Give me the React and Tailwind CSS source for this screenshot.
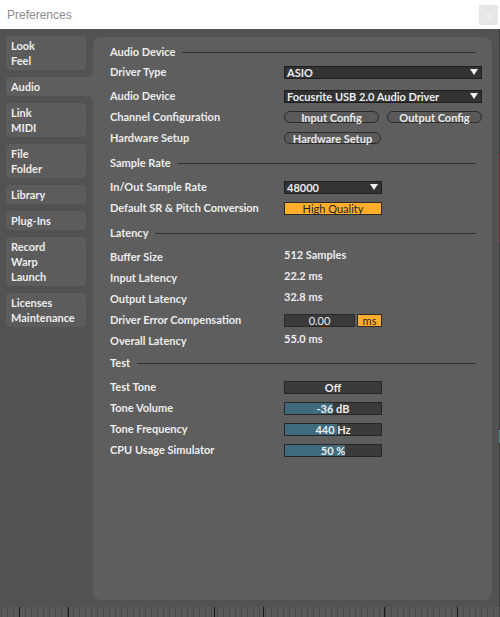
import React from "react";

const FONT = { fontFamily: "Lato, 'Noto Sans', sans-serif" };

function Tab({ lines, active }) {
  if (active) {
    return (
      <div className="relative flex">
        <div className="w-[87px] rounded-l-[4px] bg-[#5e5e5e] px-[5px] py-[2px] leading-[15px]">
          {lines.map((l) => (
            <div key={l}>{l}</div>
          ))}
        </div>
        <div className="absolute right-0 top-[-7px] h-[7px] w-[7px] bg-[#5e5e5e]">
          <div className="h-full w-full rounded-br-[7px] bg-[#525252]" />
        </div>
        <div className="absolute right-0 bottom-[-7px] h-[7px] w-[7px] bg-[#5e5e5e]">
          <div className="h-full w-full rounded-tr-[7px] bg-[#525252]" />
        </div>
      </div>
    );
  }
  return (
    <div className="w-[80px] rounded-[4px] bg-[#5c5c5c] px-[5px] py-[2px] leading-[15px]">
      {lines.map((l) => (
        <div key={l}>{l}</div>
      ))}
    </div>
  );
}

function Header({ title, className = "" }) {
  return (
    <div className={"flex h-[20px] items-center gap-[7px] pr-[16px] " + className}>
      <span>{title}</span>
      <div className="h-px flex-1 bg-[#333333]" />
    </div>
  );
}

function Row({ label, children, className = "" }) {
  return (
    <div className={"flex h-[20px] items-center " + className}>
      <div className="w-[174px] shrink-0">{label}</div>
      <div className="flex items-center">{children}</div>
    </div>
  );
}

function Arrow() {
  return (
    <svg width="8" height="6" viewBox="0 0 8 6" className="shrink-0">
      <path d="M0 0 L8 0 L4 6 Z" fill="#f0f0f0" />
    </svg>
  );
}

function Dropdown({ value, width }) {
  return (
    <div
      className={
        "flex h-[13px] items-center justify-between border border-[#1e1e1e] bg-[#333333] pl-[2px] pr-[3px] leading-none " +
        width
      }
    >
      <span>{value}</span>
      <Arrow />
    </div>
  );
}

function Pill({ children, width }) {
  return (
    <div
      className={
        "flex h-[12px] items-center justify-center rounded-full border border-[#2a2a2a] bg-[#5a5a5a] leading-none " +
        width
      }
    >
      {children}
    </div>
  );
}

function Slider({ value, pct }) {
  return (
    <div className="relative flex h-[13px] w-[98px] items-center justify-center border border-[#262626] bg-[#3b3b3b] leading-none">
      {pct > 0 && (
        <div className="absolute inset-y-0 left-0 bg-[#3f6b7d]" style={{ width: pct + "%" }} />
      )}
      <span className="relative">{value}</span>
    </div>
  );
}

export default function App() {
  const majors = [19, 68, 214, 263, 384, 457];
  const minors = [];
  for (let x = 1; x < 500; x += 6) minors.push(x);
  return (
    <div
      className="relative flex h-[617px] w-[500px] flex-col overflow-hidden bg-[#525252] text-[11px] font-bold text-[#ececec]"
      style={FONT}
    >
      {/* Title bar */}
      <div className="flex h-[29px] shrink-0 items-center justify-between bg-white pl-[7px] pr-[2px]">
        <span
          className="text-[12px] font-normal text-[#8c8c8c]"
          style={{ fontFamily: "'Liberation Sans', Arial, sans-serif" }}
        >
          Preferences
        </span>
        <div className="flex h-[20px] w-[19px] items-center justify-center bg-[#e6e6e6] text-[10px] font-normal leading-none text-[#f8f8f8]">
          x
        </div>
      </div>

      {/* Body */}
      <div className="flex flex-1">
        {/* Sidebar */}
        <div className="flex w-[93px] flex-col gap-[7px] pl-[6px] pt-[7px]">
          <Tab lines={["Look", "Feel"]} />
          <Tab lines={["Audio"]} active />
          <Tab lines={["Link", "MIDI"]} />
          <Tab lines={["File", "Folder"]} />
          <Tab lines={["Library"]} />
          <Tab lines={["Plug-Ins"]} />
          <Tab lines={["Record", "Warp", "Launch"]} />
          <Tab lines={["Licenses", "Maintenance"]} />
        </div>

        {/* Panel */}
        <div className="mt-[8px] mb-[7px] flex w-[399px] flex-col rounded-[8px] bg-[#5e5e5e] pl-[17px] pt-[5px]">
          <Header title="Audio Device" />
          <Row label="Driver Type">
            <Dropdown value="ASIO" width="w-[198px]" />
          </Row>
          <Row label="Audio Device" className="mt-[4px]">
            <Dropdown value="Focusrite USB 2.0 Audio Driver" width="w-[198px]" />
          </Row>
          <Row label="Channel Configuration" className="mt-[1px]">
            <div className="flex gap-[8px]">
              <Pill width="w-[95px]">Input Config</Pill>
              <Pill width="w-[95px]">Output Config</Pill>
            </div>
          </Row>
          <Row label="Hardware Setup" className="mt-[1px]">
            <Pill width="w-[97px]">Hardware Setup</Pill>
          </Row>

          <Header title="Sample Rate" className="mt-[5px]" />
          <Row label="In/Out Sample Rate" className="mt-[4px]">
            <Dropdown value="48000" width="w-[98px]" />
          </Row>
          <Row label="Default SR & Pitch Conversion" className="mt-[1px]">
            <div className="flex h-[13px] w-[98px] items-center justify-center border border-[#2a2a2a] bg-[#ffae2b] font-normal leading-none text-[#1e1e1e]">
              High Quality
            </div>
          </Row>

          <Header title="Latency" className="mt-[5px]" />
          <Row label="Buffer Size" className="mt-[4px]">
            <span className="-mt-[3px]">512 Samples</span>
          </Row>
          <Row label="Input Latency" className="mt-[1px]">
            <span className="-mt-[3px]">22.2 ms</span>
          </Row>
          <Row label="Output Latency" className="mt-[1px]">
            <span className="-mt-[3px]">32.8 ms</span>
          </Row>
          <Row label="Driver Error Compensation" className="mt-[1px]">
            <div className="flex gap-[2px]">
              <div className="flex h-[13px] w-[71px] items-center justify-center border border-[#2a2a2a] bg-[#3b3b3b] font-normal leading-none">
                0.00
              </div>
              <div className="flex h-[13px] w-[25px] items-center justify-center border border-[#2a2a2a] bg-[#ffae2b] font-normal leading-none text-[#1e1e1e]">
                ms
              </div>
            </div>
          </Row>
          <Row label="Overall Latency" className="mt-[1px]">
            <span className="-mt-[3px]">55.0 ms</span>
          </Row>

          <Header title="Test" className="mt-[2px]" />
          <Row label="Test Tone" className="mt-[4px]">
            <Slider value="Off" pct={0} />
          </Row>
          <Row label="Tone Volume" className="mt-[1px]">
            <Slider value="-36 dB" pct={50} />
          </Row>
          <Row label="Tone Frequency" className="mt-[1px]">
            <Slider value="440 Hz" pct={54} />
          </Row>
          <Row label="CPU Usage Simulator" className="mt-[1px]">
            <Slider value="50 %" pct={62} />
          </Row>
        </div>

        {/* Right edge */}
        <div className="flex w-[8px] justify-end">
          <div className="flex w-[1px] flex-col">
            <div className="h-[124px] bg-[#3a3a3a]" />
            <div className="h-[90px] bg-[#7a2c33]" />
            <div className="h-[187px] bg-[#3a3a3a]" />
            <div className="h-[13px] bg-[#3f8f85]" />
            <div className="flex-1 bg-[#3a3a3a]" />
          </div>
        </div>
      </div>

      {/* Bottom ruler */}
      <svg width="500" height="10" className="block shrink-0">
        <rect width="500" height="10" fill="#595959" />
        {minors.map((x) => (
          <rect key={x} x={x} y="0" width="1" height="10" fill="#4a4a4a" />
        ))}
        {majors.map((x) => (
          <rect key={"m" + x} x={x} y="0" width="1" height="10" fill="#161616" />
        ))}
      </svg>
    </div>
  );
}
